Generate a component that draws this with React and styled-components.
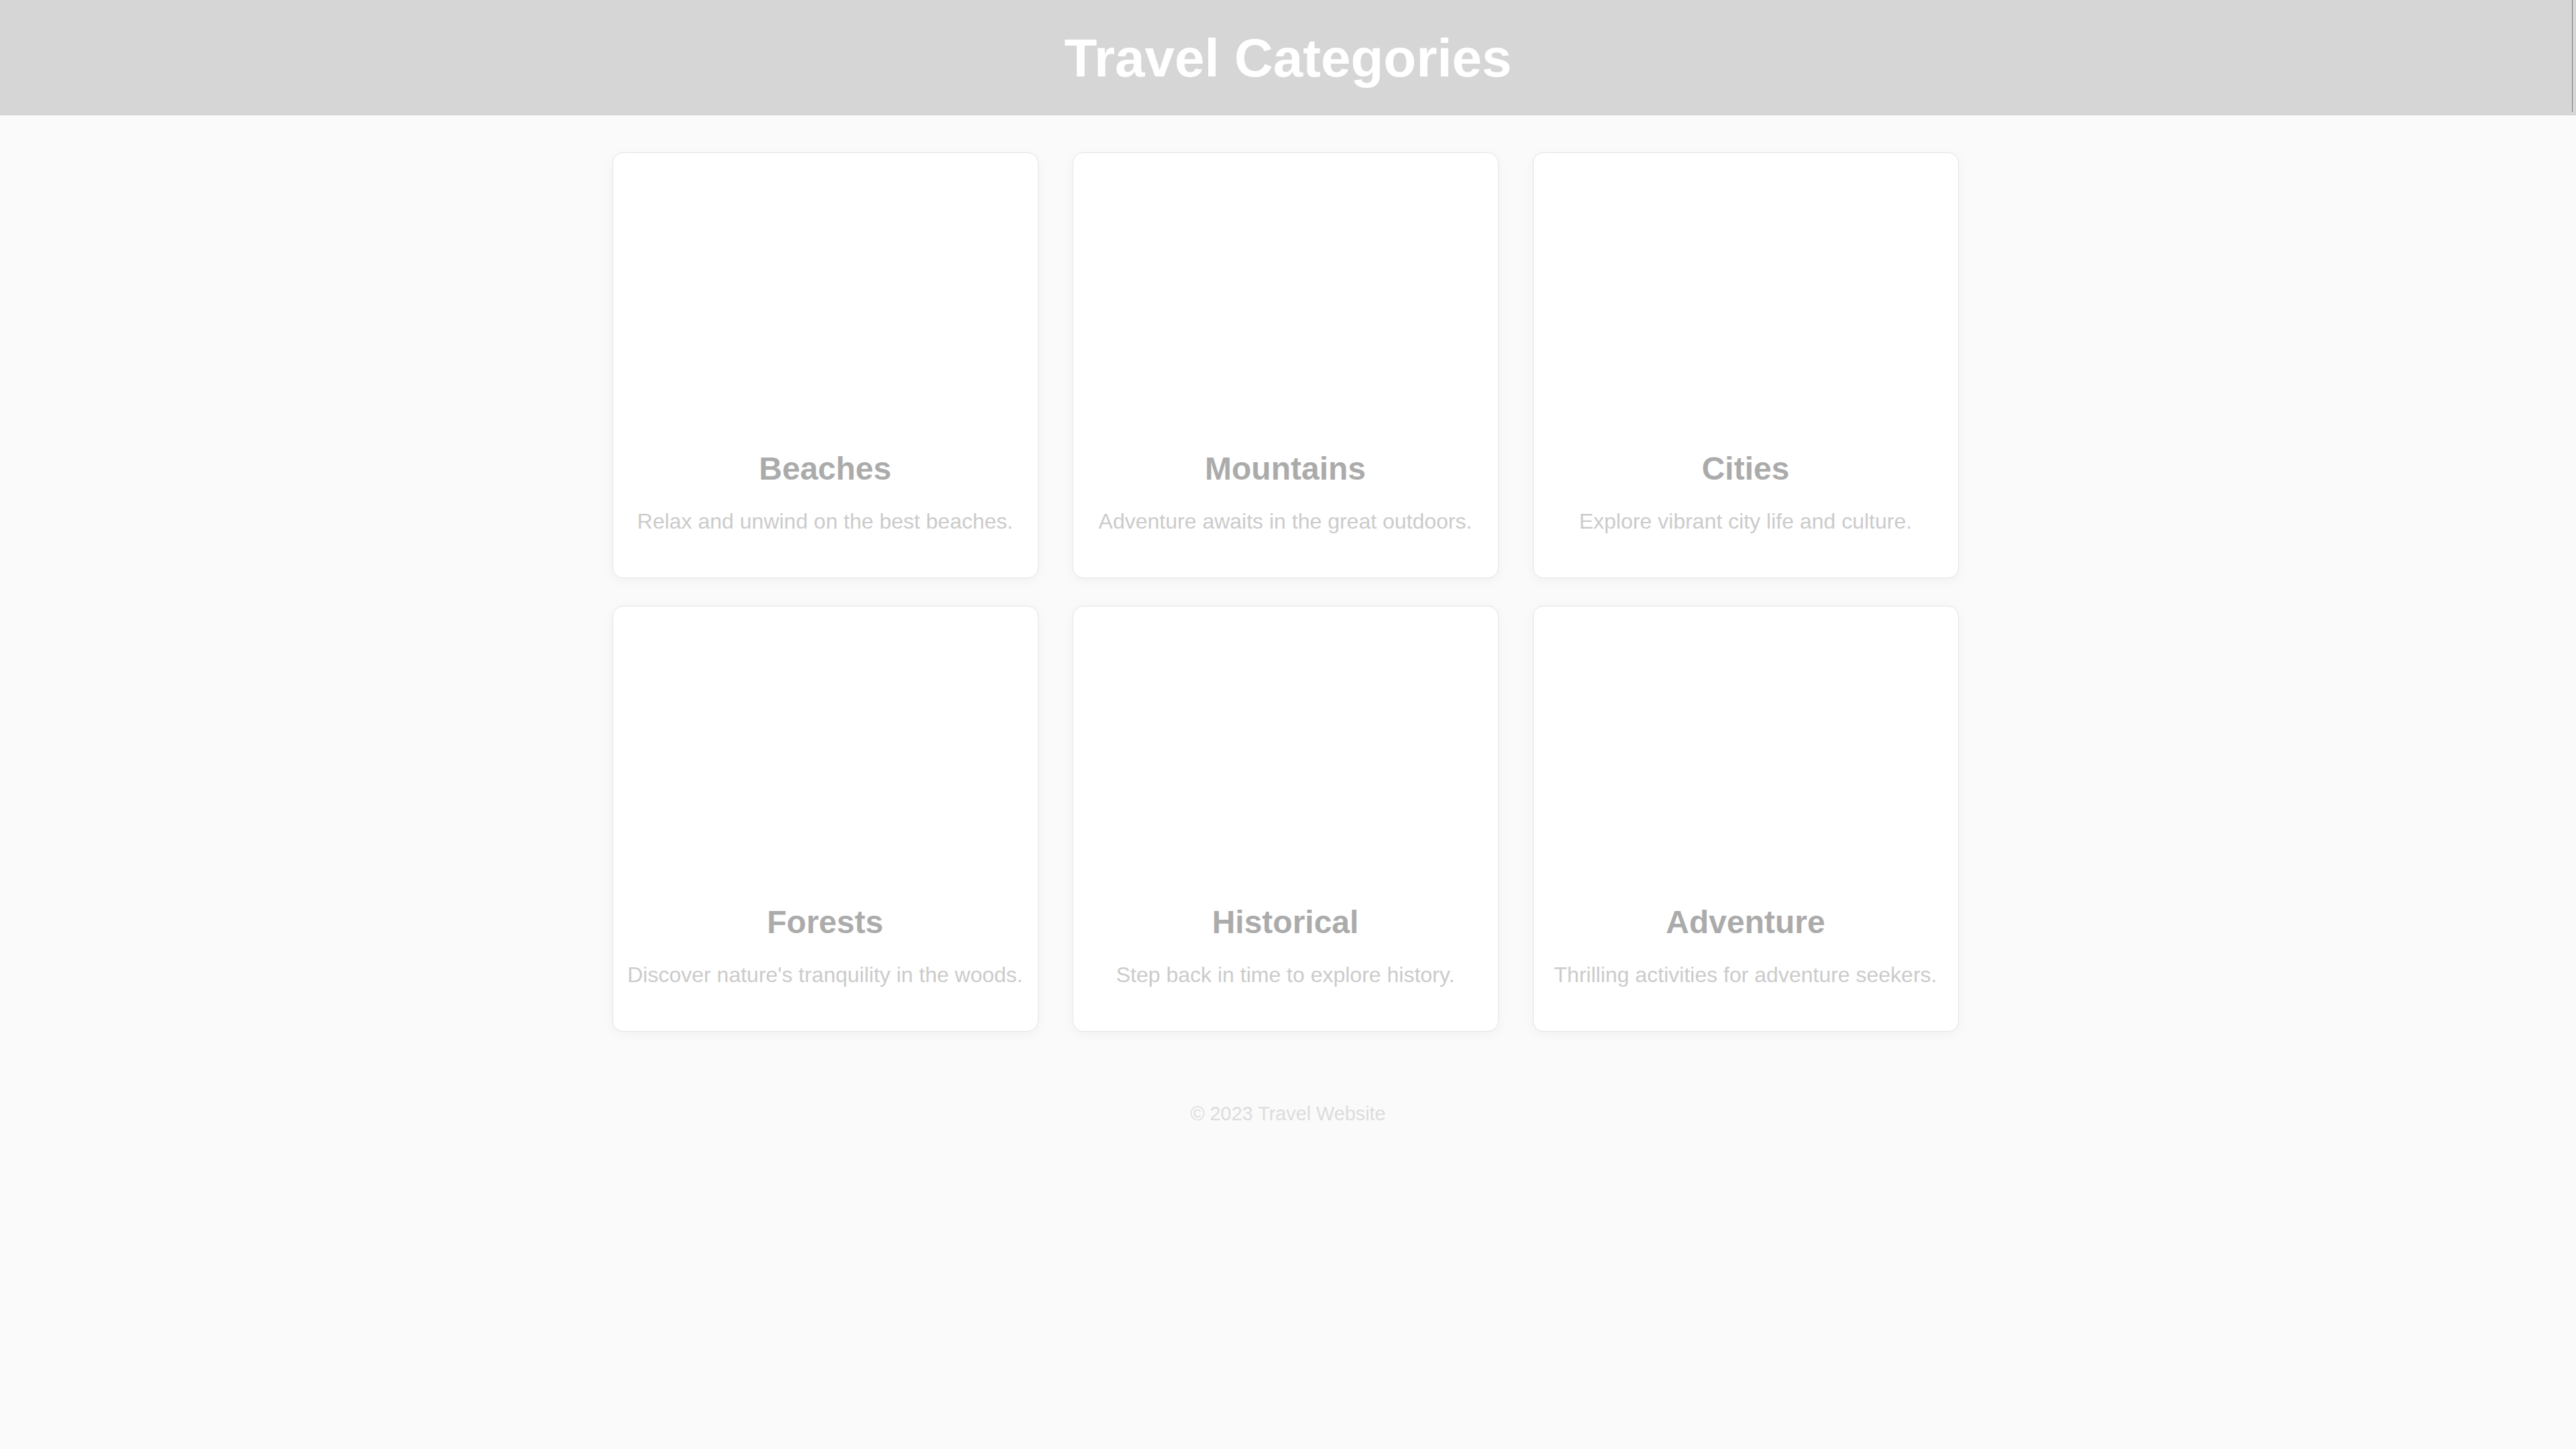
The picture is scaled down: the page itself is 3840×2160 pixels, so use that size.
import React from "react";
import styled, { createGlobalStyle } from "styled-components";

const GlobalStyle = createGlobalStyle`
  html, body {
    margin: 0;
    padding: 0;
    background: #fafafa;
    font-family: "Liberation Sans", Arial, sans-serif;
  }
  * { box-sizing: border-box; }
`;

const Page = styled.div`
  min-height: 2160px;
  background: #fafafa;
  display: flex;
  flex-direction: column;
`;

const Header = styled.header`
  position: relative;
  height: 172px;
  background: #d6d6d6;
  display: flex;
  align-items: flex-start;
  justify-content: center;
  padding-top: 41px;

  &::after {
    content: "";
    position: absolute;
    top: 0;
    right: 5px;
    width: 1px;
    height: 167px;
    background: #7a7a7a;
  }
`;

const Title = styled.h1`
  margin: 0;
  font-size: 80px;
  font-weight: 700;
  line-height: 92px;
  color: #ffffff;
`;

const Grid = styled.main`
  align-self: center;
  margin-top: 55px;
  margin-right: 8px;
  display: grid;
  grid-template-columns: repeat(3, 635px);
  column-gap: 51px;
  row-gap: 41px;
`;

const Card = styled.article`
  height: 635px;
  background: #ffffff;
  border: 1px solid #e4e4e4;
  border-radius: 16px;
  box-shadow: 0 4px 18px rgba(0, 0, 0, 0.04);
  display: flex;
  flex-direction: column;
  overflow: hidden;
`;

const ImageArea = styled.div`
  height: 443px;
  flex: none;
`;

const Content = styled.div`
  display: flex;
  flex-direction: column;
  align-items: center;
  text-align: center;
  padding: 0 20px;
`;

const CardTitle = styled.h3`
  margin: 0 0 33px;
  font-size: 48px;
  line-height: 55px;
  font-weight: 700;
  color: #ababab;
`;

const CardText = styled.p`
  margin: 0;
  font-size: 32px;
  line-height: 37px;
  color: #cbcbcb;
  white-space: nowrap;
`;

const Footer = styled.footer`
  margin-top: 106px;
  text-align: center;
  font-size: 28.8px;
  line-height: 33px;
  color: #dcdcdc;
`;

const categories = [
  { title: "Beaches", text: "Relax and unwind on the best beaches." },
  { title: "Mountains", text: "Adventure awaits in the great outdoors." },
  { title: "Cities", text: "Explore vibrant city life and culture." },
  { title: "Forests", text: "Discover nature's tranquility in the woods." },
  { title: "Historical", text: "Step back in time to explore history." },
  { title: "Adventure", text: "Thrilling activities for adventure seekers." },
];

export default function App() {
  return (
    <>
      <GlobalStyle />
      <Page>
        <Header>
          <Title>Travel Categories</Title>
        </Header>
        <Grid>
          {categories.map((c) => (
            <Card key={c.title}>
              <ImageArea />
              <Content>
                <CardTitle>{c.title}</CardTitle>
                <CardText>{c.text}</CardText>
              </Content>
            </Card>
          ))}
        </Grid>
        <Footer>© 2023 Travel Website</Footer>
      </Page>
    </>
  );
}
